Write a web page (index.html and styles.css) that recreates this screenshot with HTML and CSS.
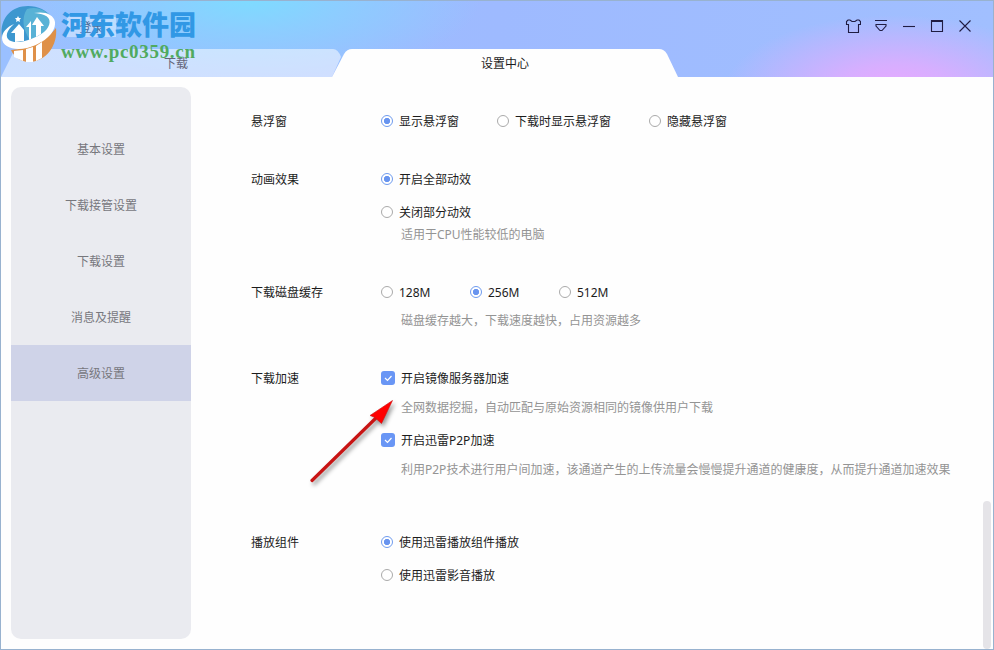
FILE: index.html
```html
<!DOCTYPE html>
<html lang="zh-CN">
<head>
    <meta charset="UTF-8">
    <title>设置中心</title>
    <link rel="stylesheet" href="styles.css">
</head>
<body>
    <div class="window">
        <header class="header">
            <div class="titlebar">
                <span class="login">登录</span>
                <div class="window-buttons">
                    <svg width="16" height="16" viewBox="0 0 16 16"><path d="M3.500 14.500V6.500H1.500V3.500L3 2H5L7 3.500H10L12 2H14L15.500 3.500V6.500H13.500V14.500Z"/></svg>
                    <svg width="16" height="16" viewBox="0 0 16 16"><path d="M2 2.500H14M3 6.500H13V8L9 12.500H7L3 8Z"/></svg>
                    <svg width="16" height="16" viewBox="0 0 16 16"><path d="M2 8.500H14"/></svg>
                    <svg width="16" height="16" viewBox="0 0 16 16"><path d="M2.500 2.500H13.500V13.500H2.500ZM2.500 3.500H13.500"/></svg>
                    <svg width="16" height="16" viewBox="0 0 16 16"><path d="M2.500 2.500L13.500 13.500M13.500 2.500L2.500 13.500"/></svg>
                </div>
            </div>
            <nav class="tabs">
                <svg class="tab-shapes" width="994" height="28" viewBox="0 0 994 28">
                    <path class="tab-back" d="M1 28L13 4Q15 0 20 0H333Q338 0 341 8L332 28Z"/>
                    <path class="tab-front" d="M332 28L344 5Q347 0 352 0H659Q664 0 667 5L678 28Z"/>
                </svg>
                <span class="tab tab-download">下载</span>
                <span class="tab tab-settings">设置中心</span>
            </nav>
            <div class="watermark">
                <svg width="58" height="64" viewBox="0 0 58 64">
                    <path fill="#3d97cf" d="M2 38C-1 20 10 6 28 6C38 6 47 10 52 18C54 32 38 41 20 43C12 44 4 42 2 38Z"/>
                    <path fill="#58b2d6" d="M27 9C37 6 47 10 52 19C50 31 39 38 30 40C23 30 21 18 27 9Z"/>
                    <path fill="#df9149" d="M11 50C29 49 45 42 56 28C58 45 46 62 29 62C21 62 14 57 11 50Z"/>
                    <path fill="#fff" d="M34 13C44 11 54 14 55 22C56 34 42 44 27 48C14 51 2 47 2 38C2 32 7 27 14 24C8 29 5 35 8 39C14 46 34 40 44 32C51 26 52 18 44 15C41 14 38 13 34 13Z"/>
                    <path fill="#fff" d="M15 42V33H11L19 24L24 30V41ZM29 40V27H26L31 21V39ZM36 37V25H32L37 17L44 26H41V34Z"/>
                    <path fill="#fff" d="M14 51L23 50V61L14 57ZM26 49L33 47V62H26ZM36 46L42 42V58L36 61Z"/>
                    <path fill="#fff" d="M18 16L19 18H21L19.500 20L20 22L18 21L16 22L16.500 20L15 18H17Z"/>
                </svg>
                <div class="watermark-text">
                    <div class="site-name">河东软件园</div>
                    <div class="site-url">www.pc0359.cn</div>
                </div>
            </div>
        </header>

        <div class="content">
            <aside class="sidebar">
                <div class="menu-item">基本设置</div>
                <div class="menu-item">下载接管设置</div>
                <div class="menu-item">下载设置</div>
                <div class="menu-item">消息及提醒</div>
                <div class="menu-item active">高级设置</div>
            </aside>

            <main class="settings">
                <section class="row row-float">
                    <div class="name">悬浮窗</div>
                    <div class="options">
                        <label class="option wide"><i class="radio checked"></i>显示悬浮窗</label>
                        <label class="option wide"><i class="radio"></i>下载时显示悬浮窗</label>
                        <label class="option"><i class="radio"></i>隐藏悬浮窗</label>
                    </div>
                </section>

                <section class="row row-effect">
                    <div class="name">动画效果</div>
                    <div>
                        <label class="option"><i class="radio checked"></i>开启全部动效</label>
                        <label class="option second"><i class="radio"></i>关闭部分动效</label>
                        <p class="hint hint-close">适用于CPU性能较低的电脑</p>
                    </div>
                </section>

                <section class="row row-cache">
                    <div class="name">下载磁盘缓存</div>
                    <div>
                        <div class="options">
                            <label class="option size"><i class="radio"></i>128M</label>
                            <label class="option size"><i class="radio checked"></i>256M</label>
                            <label class="option"><i class="radio"></i>512M</label>
                        </div>
                        <p class="hint hint-cache">磁盘缓存越大，下载速度越快，占用资源越多</p>
                    </div>
                </section>

                <section class="row row-speed">
                    <div class="name">下载加速</div>
                    <div>
                        <label class="option"><svg class="checkbox" width="14" height="14" viewBox="0 0 14 14"><path d="M4 7L6.500 9.500L10.500 5"/></svg>开启镜像服务器加速</label>
                        <p class="hint">全网数据挖掘，自动匹配与原始资源相同的镜像供用户下载</p>
                        <label class="option p2p"><svg class="checkbox" width="14" height="14" viewBox="0 0 14 14"><path d="M4 7L6.500 9.500L10.500 5"/></svg>开启迅雷P2P加速</label>
                        <p class="hint">利用P2P技术进行用户间加速，该通道产生的上传流量会慢慢提升通道的健康度，从而提升通道加速效果</p>
                    </div>
                </section>

                <section class="row">
                    <div class="name">播放组件</div>
                    <div>
                        <label class="option"><i class="radio checked"></i>使用迅雷播放组件播放</label>
                        <label class="option second"><i class="radio"></i>使用迅雷影音播放</label>
                    </div>
                </section>
            </main>
        </div>

        <div class="scrollbar"></div>
        <svg class="arrow" width="100" height="100" viewBox="0 0 100 100">
            <path fill="none" stroke="#c81414" stroke-width="3.2" stroke-linecap="round" d="M7 85.500L72 22"/>
            <path fill="#f00" stroke="#c81414" stroke-width=".6" d="M87.500 5.500L65 20.500L70 22.500L71.500 24L76.500 28.500Z"/>
        </svg>
    </div>
</body>
</html>
```

FILE: styles.css
```css
* {
    box-sizing: border-box;
}
body {
    margin: 0;
    font: 12px/20px "Noto Sans", "Noto Sans CJK SC", sans-serif;
    color: #1c1c1c;
}
.window {
    position: relative;
    width: 994px;
    height: 650px;
    overflow: hidden;
    background: #fefefe;
}
/* window frame */
.window::after {
    content: "";
    position: absolute;
    inset: 0;
    border: 1px solid #98b2cf;
    pointer-events: none;
}
.header {
    position: relative;
    height: 77px;
    background:
        radial-gradient(ellipse 170px 75px at 895px 90px, #eaa8ff 0%, rgba(224, 172, 255, 0.85) 35%, rgba(170, 185, 255, 0) 100%),
        radial-gradient(ellipse 230px 80px at 250px 0, #7edbff 0%, rgba(135, 211, 255, 0.75) 40%, rgba(155, 190, 255, 0) 100%),
        linear-gradient(90deg, #9ac0ff 0%, #9ebaff 50%, #a1bfff 100%);
}
.titlebar {
    display: flex;
    justify-content: space-between;
    height: 49px;
    padding: 17px 21px 0 67px;
}
.login {
    width: 49px;
    height: 20px;
    line-height: 22px;
    text-align: center;
    color: #4a6d9a;
    background: rgba(255, 255, 255, 0.4);
}
.window-buttons {
    display: flex;
    gap: 12px;
    padding-top: 1px;
}
.window-buttons svg {
    fill: none;
    stroke: #201c42;
    stroke-width: 1.1;
}
.tabs {
    position: relative;
    display: flex;
    height: 28px;
}
.tab-shapes {
    position: absolute;
    left: 0;
    top: 0;
}
.tab-back {
    fill: rgba(255, 255, 255, 0.52);
}
.tab-front {
    fill: #fefefe;
}
.tab {
    position: relative;
    line-height: 30px;
    text-align: center;
}
.tab-download {
    width: 332px;
    padding-left: 20px;
    color: #66667a;
}
.tab-settings {
    width: 346px;
}
.watermark {
    position: absolute;
    left: 0;
    top: 0;
    display: flex;
}
.watermark-text {
    padding: 6px 0 0 3px;
}
.site-name {
    height: 36px;
    font: 900 27px/36px "Noto Sans CJK SC", sans-serif;
    color: #3198e5;
    white-space: nowrap;
}
.site-url {
    font: bold 19px/20px "Liberation Serif", serif;
    letter-spacing: 0.7px;
    color: #50aa60;
}
.content {
    display: flex;
    height: 573px;
}
.sidebar {
    width: 180px;
    height: 552px;
    margin: 10px 0 0 11px;
    padding-top: 34px;
    border-radius: 10px;
    background: #eaebf0;
}
.menu-item {
    height: 56px;
    line-height: 58px;
    text-align: center;
    color: #77777d;
}
.menu-item.active {
    background: #cfd3e8;
}
.settings {
    flex: 1;
    padding: 35px 0 0 60px;
}
.row {
    display: flex;
}
.row-float {
    height: 58px;
}
.row-effect {
    height: 113px;
}
.row-cache {
    height: 86px;
}
.row-speed {
    height: 164px;
}
.name {
    width: 130px;
}
.options {
    display: flex;
}
.option {
    display: flex;
    align-items: center;
    height: 20px;
    white-space: nowrap;
}
.wide {
    margin-right: 38px;
}
.size {
    width: 89px;
}
.second {
    margin-top: 13px;
}
.radio {
    width: 12px;
    height: 12px;
    margin: 0 6px 2px 0;
    border: 1px solid #aaa;
    border-radius: 50%;
    background: #fff;
}
.radio.checked {
    border-color: #6f9bee;
    background: radial-gradient(circle, #6894ef 2.8px, #fff 3.5px);
}
.checkbox {
    margin: 0 6px 2px 0;
    border-radius: 3px;
    background: #6996f5;
    fill: none;
    stroke: #fff;
    stroke-width: 1.2;
}
.hint {
    margin: 9px 0 0 20px;
    color: #949494;
    white-space: nowrap;
}
.hint-close {
    margin-top: 2px;
}
.hint-cache {
    margin-top: 8px;
}
.p2p {
    margin-top: 13px;
}
.scrollbar {
    position: absolute;
    left: 983px;
    top: 501px;
    width: 8px;
    height: 148px;
    border-radius: 4px;
    background: #e5e4e8;
}
.arrow {
    position: absolute;
    left: 305px;
    top: 395px;
    filter: drop-shadow(2px 3px 2px rgba(0, 0, 0, 0.4));
}
```
